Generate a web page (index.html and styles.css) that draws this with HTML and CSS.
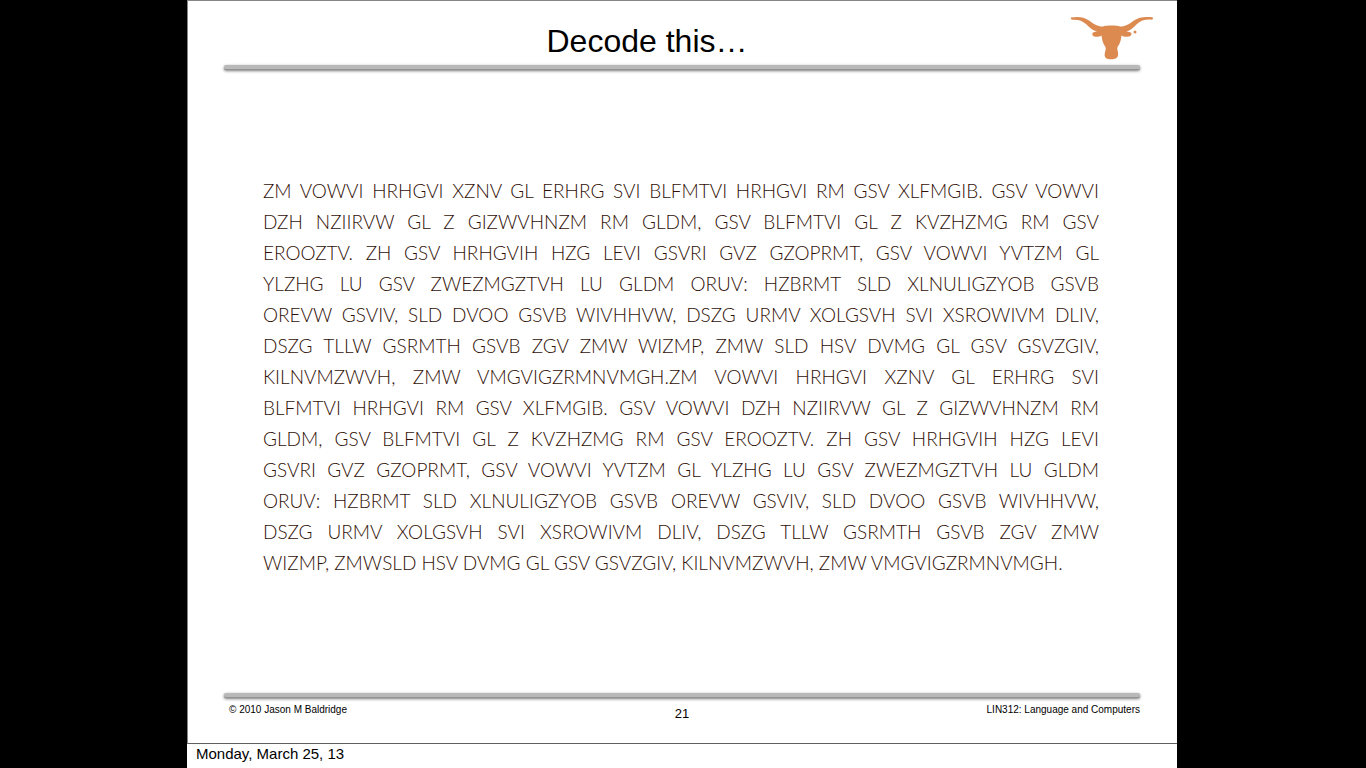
FILE: index.html
```html
<!DOCTYPE html>
<html lang="en">
<head>
<meta charset="utf-8">
<meta name="viewport" content="width=device-width, initial-scale=1">
<title>Decode this…</title>
<link rel="stylesheet" href="styles.css">
</head>
<body>
<main class="page">
  <section class="slide">
    <header class="slide-header">
      <h1 class="title">Decode this…</h1>
      <svg class="logo" viewBox="0 0 84 44" role="img" aria-label="Longhorn logo">
        <path d="M1 1.500C8 .3 14 1 19 4.500C24 8 27 10.500 33 10.500C36 9.300 47 9.300 50 10.500C56 10.500 59 8 64 4.500C69 1 75 .3 82.500 1.300Q84 2.500 82 3.700C75 3.200 71 4.500 67 8C63 12 60 14.500 56.500 15.500Q60 15.500 61.500 17Q62 20.500 57 20.700Q53.500 21 51.500 19.500C51 24 50 28 47.500 31Q46.500 33 48 36Q49 42 44 43Q41 43.600 38 43Q33.500 42 35 36Q36.500 33 35.500 31C33 28 32 24 31.500 19.500Q29.500 21 26 20.700Q21.500 20.500 22.500 17Q23.500 15.500 27 15.500C23 14.500 20 12 16 8C12 4.500 8 3.200 2 3.800Q0 3 1 1.500Z"/>
        <circle cx="65" cy="16" r="1.500"/>
      </svg>
    </header>
    <div class="rule"></div>
    <p class="cipher">
      <span>ZM VOWVI HRHGVI XZNV GL ERHRG SVI BLFMTVI HRHGVI RM GSV XLFMGIB. GSV VOWVI</span>
      <span>DZH NZIIRVW GL Z GIZWVHNZM RM GLDM, GSV BLFMTVI GL Z KVZHZMG RM GSV</span>
      <span>EROOZTV. ZH GSV HRHGVIH HZG LEVI GSVRI GVZ GZOPRMT, GSV VOWVI YVTZM GL</span>
      <span>YLZHG LU GSV ZWEZMGZTVH LU GLDM ORUV: HZBRMT SLD XLNULIGZYOB GSVB</span>
      <span>OREVW GSVIV, SLD DVOO GSVB WIVHHVW, DSZG URMV XOLGSVH SVI XSROWIVM DLIV,</span>
      <span>DSZG TLLW GSRMTH GSVB ZGV ZMW WIZMP, ZMW SLD HSV DVMG GL GSV GSVZGIV,</span>
      <span>KILNVMZWVH, ZMW VMGVIGZRMNVMGH.ZM VOWVI HRHGVI XZNV GL ERHRG SVI</span>
      <span>BLFMTVI HRHGVI RM GSV XLFMGIB. GSV VOWVI DZH NZIIRVW GL Z GIZWVHNZM RM</span>
      <span>GLDM, GSV BLFMTVI GL Z KVZHZMG RM GSV EROOZTV. ZH GSV HRHGVIH HZG LEVI</span>
      <span>GSVRI GVZ GZOPRMT, GSV VOWVI YVTZM GL YLZHG LU GSV ZWEZMGZTVH LU GLDM</span>
      <span>ORUV: HZBRMT SLD XLNULIGZYOB GSVB OREVW GSVIV, SLD DVOO GSVB WIVHHVW,</span>
      <span>DSZG URMV XOLGSVH SVI XSROWIVM DLIV, DSZG TLLW GSRMTH GSVB ZGV ZMW</span>
      <span>WIZMP, ZMWSLD HSV DVMG GL GSV GSVZGIV, KILNVMZWVH, ZMW VMGVIGZRMNVMGH.</span>
    </p>
    <div class="rule"></div>
    <footer class="slide-footer">
      <span>© 2010 Jason M Baldridge</span>
      <span class="number">21</span>
      <span class="course">LIN312: Language and Computers</span>
    </footer>
  </section>
  <p class="date">Monday, March 25, 13</p>
</main>
</body>
</html>
```
FILE: styles.css
```css
* {
  box-sizing: border-box;
}

body {
  display: grid;
  grid-template-columns: 187fr 990fr 189fr;
  min-height: 100vh;
  margin: 0;
  background: #000;
  color: #000;
  font-family: "Liberation Sans", Arial, sans-serif;
}

.page {
  display: flex;
  flex-direction: column;
  grid-column: 2;
  background: #fff;
}

.slide {
  display: flex;
  flex: 1;
  flex-direction: column;
  padding: 0 37px 0 36px;
  border: solid #858585;
  border-width: 1px 0 1px 1px;
  border-bottom-color: #606060;
}

.slide-header {
  display: grid;
  grid-template-columns: 84px 1fr 84px;
  height: 64px;
  padding-top: 15px;
  margin-right: -14px;
}

.title {
  grid-column: 2;
  margin: 0;
  padding-right: 84px;
  font-size: 32px;
  font-weight: 400;
  line-height: 50px;
  text-align: center;
}

.logo {
  width: 84px;
  height: 44px;
  fill: #dc8a50;
}

.rule {
  height: 5px;
  border-bottom: 1px solid #929292;
  border-radius: 2px;
  background: #b9b9b9;
  box-shadow: 0 1px 3px #777;
}

.cipher {
  flex: 1;
  margin: 0;
  padding: 105px 41px 0 39px;
  color: #300f05;
  font-family: Lato, sans-serif;
  font-size: 19px;
  font-weight: 300;
  line-height: 31px;
}

.cipher span {
  display: block;
  text-align: justify;
  text-align-last: justify;
  white-space: nowrap;
}

.cipher span:last-child {
  text-align-last: left;
}

.slide-footer {
  display: grid;
  grid-template-columns: 1fr auto 1fr;
  height: 45px;
  padding: 5px 0 0 5px;
  font-size: 10px;
  line-height: 14px;
}

.number {
  padding-right: 5px;
  font-size: 13px;
  line-height: 22px;
}

.course {
  text-align: right;
}

.date {
  margin: 0;
  padding: 0 9px 4px;
  font-size: 15px;
  line-height: 20px;
}
```
